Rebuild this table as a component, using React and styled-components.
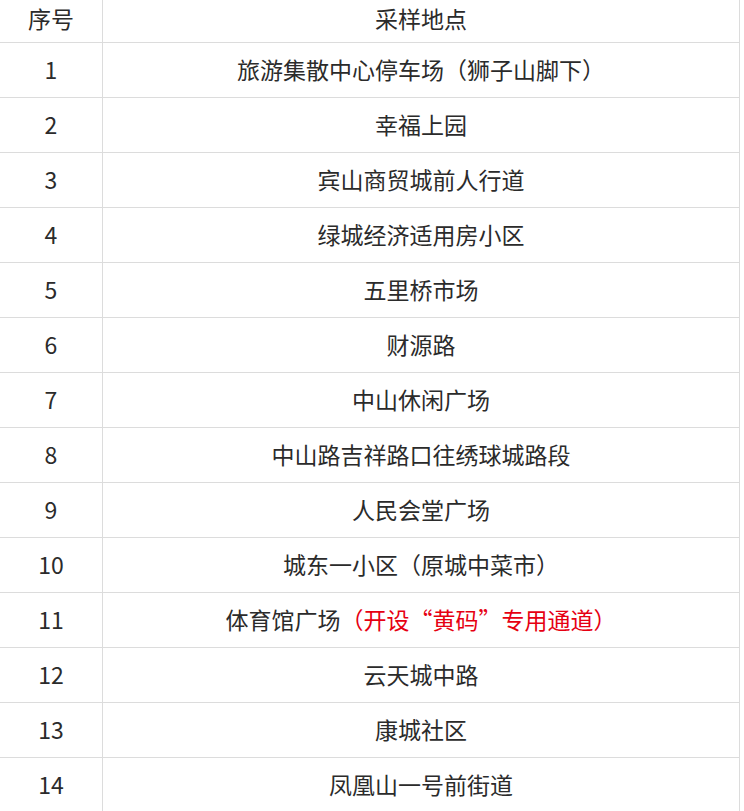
import React from "react";
import styled, { createGlobalStyle } from "styled-components";

const GlobalStyle = createGlobalStyle`
  html, body {
    margin: 0;
    padding: 0;
    background: #fff;
  }
  body {
    font-family: "Noto Sans CJK SC", "Noto Sans", sans-serif;
    color: #2b2b2b;
  }
`;

const rows = [
  { no: 1, place: "旅游集散中心停车场（狮子山脚下）" },
  { no: 2, place: "幸福上园" },
  { no: 3, place: "宾山商贸城前人行道" },
  { no: 4, place: "绿城经济适用房小区" },
  { no: 5, place: "五里桥市场" },
  { no: 6, place: "财源路" },
  { no: 7, place: "中山休闲广场" },
  { no: 8, place: "中山路吉祥路口往绣球城路段" },
  { no: 9, place: "人民会堂广场" },
  { no: 10, place: "城东一小区（原城中菜市）" },
  { no: 11, place: "体育馆广场", note: "（开设“黄码”专用通道）" },
  { no: 12, place: "云天城中路" },
  { no: 13, place: "康城社区" },
  { no: 14, place: "凤凰山一号前街道" },
];

const Table = styled.table`
  width: 740px;
  border-collapse: separate;
  border-spacing: 0;
  table-layout: fixed;
`;

const Cell = styled.td`
  width: ${(p) => (p.narrow ? "103px" : "auto")};
  height: ${(p) => (p.head ? "43px" : "55px")};
  box-sizing: border-box;
  padding: 0;
  padding-bottom: ${(p) => (p.head ? "5px" : "0")};
  border-right: 1px solid #dcdcdc;
  border-bottom: 1px solid #dcdcdc;
  text-align: center;
  vertical-align: middle;
  font-size: 23px;
  font-weight: 400;
  line-height: 1.2;
  color: #2b2b2b;
  white-space: nowrap;
`;

const Note = styled.span`
  color: #e60012;
`;

export default function App() {
  return (
    <>
      <GlobalStyle />
      <Table>
        <thead>
          <tr>
            <Cell as="th" head narrow>序号</Cell>
            <Cell as="th" head>采样地点</Cell>
          </tr>
        </thead>
        <tbody>
          {rows.map((r) => (
            <tr key={r.no}>
              <Cell narrow>{r.no}</Cell>
              <Cell>
                {r.place}
                {r.note && <Note>{r.note}</Note>}
              </Cell>
            </tr>
          ))}
        </tbody>
      </Table>
    </>
  );
}
